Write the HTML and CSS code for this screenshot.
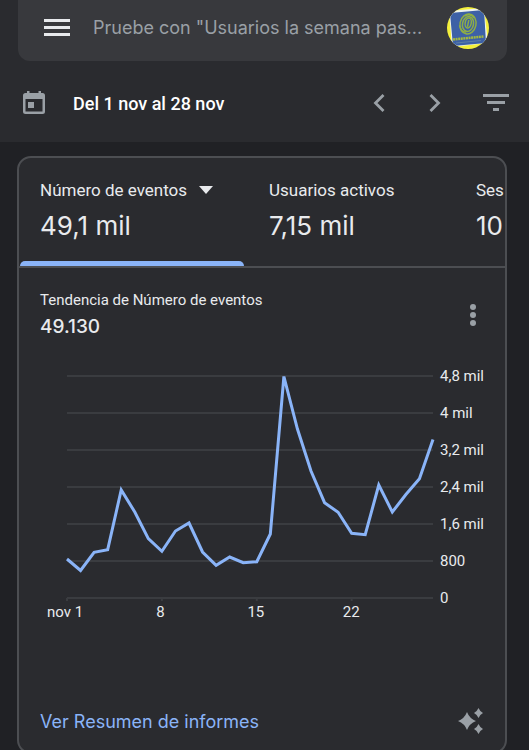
FILE: index.html
```html
<!DOCTYPE html>
<html lang="es">
<head>
<meta charset="utf-8">
<meta name="viewport" content="width=device-width, initial-scale=1">
<title>Resumen</title>
<link rel="stylesheet" href="styles.css">
</head>
<body>
<header class="header">
  <div class="search">
    <button class="icon-button" type="button" aria-label="Menú">
      <svg width="26" height="18" viewBox="0 0 26 18" fill="#e8eaed"><path d="M0 0h26v3H0zM0 7h26v3H0zM0 14h26v3H0z"/></svg>
    </button>
    <input class="search-input" type="text" aria-label="Buscar" placeholder="Pruebe con &quot;Usuarios la semana pas...">
    <button class="icon-button" type="button" aria-label="Cuenta">
      <svg width="42" height="42" viewBox="0 0 42 42">
        <defs><clipPath id="round"><circle cx="21" cy="21" r="21"/></clipPath></defs>
        <g clip-path="url(#round)">
          <path fill="#f4f03c" d="M0 0h42v42H0z"/>
          <path fill="#eef3ee" d="M2 4l35-3 4 35-36 4z"/>
          <path fill="#3d61a6" d="M3 6l34-3 2 33-33 3z"/>
          <g fill="none" stroke="#8fae45" stroke-width="1.500" transform="rotate(12 21 17)">
            <ellipse cx="21" cy="17" rx="8" ry="10"/>
            <ellipse cx="21" cy="17" rx="5.500" ry="7.500"/>
            <ellipse cx="21" cy="16" rx="3" ry="5"/>
            <path d="M21 13v7M13 20q3 7 8 5M16 10q5-5 10 0"/>
          </g>
          <path d="M6 32.500l31-3" stroke="#a3b93f" stroke-width="2.500" stroke-dasharray="2 .6"/>
          <path d="M9 36l25-2.500" stroke="#5d80a4" stroke-width="1"/>
        </g>
      </svg>
    </button>
  </div>
  <div class="dates">
    <svg width="22" height="24" viewBox="0 0 22 24" fill="#9aa0a6"><path fill-rule="evenodd" d="M4 0h2.500v2h9V0H18v2h1.500A2.500 2.500 0 0 1 22 4.500v16a2.500 2.500 0 0 1-2.500 2.500h-17A2.500 2.500 0 0 1 0 20.500v-16A2.500 2.500 0 0 1 2.500 2H4zM2.500 8v12.500h17V8z"/><path d="M5 11h6v6H5z"/></svg>
    <span class="range">Del 1 nov al 28 nov</span>
    <button class="icon-button" type="button" aria-label="Periodo anterior">
      <svg width="12" height="18" viewBox="0 0 12 18" fill="none" stroke="#9aa0a6" stroke-width="2.800"><path d="M10.500 1L2.500 9l8 8"/></svg>
    </button>
    <button class="icon-button next" type="button" aria-label="Periodo siguiente">
      <svg width="12" height="18" viewBox="0 0 12 18" fill="none" stroke="#9aa0a6" stroke-width="2.800"><path d="M1.500 1l8 8-8 8"/></svg>
    </button>
    <button class="icon-button filter" type="button" aria-label="Filtrar">
      <svg width="26" height="18" viewBox="0 0 26 18" fill="#9aa0a6"><path d="M0 0h26v3H0zM4 7h18v3H4zM10 14h6v3h-6z"/></svg>
    </button>
  </div>
</header>
<main class="main">
  <section class="card">
    <div class="metrics">
      <button class="metric selected" type="button">
        <span class="metric-name">Número de eventos
          <svg width="14" height="8" viewBox="0 0 14 8" fill="#e8eaed"><path d="M0 0h14L7 8z"/></svg>
        </span>
        <span class="metric-value">49,1 mil</span>
      </button>
      <button class="metric" type="button">
        <span class="metric-name">Usuarios activos</span>
        <span class="metric-value">7,15 mil</span>
      </button>
      <button class="metric" type="button">
        <span class="metric-name">Ses</span>
        <span class="metric-value">10</span>
      </button>
    </div>
    <div class="trend">
      <div>
        <h2 class="trend-title">Tendencia de Número de eventos</h2>
        <p class="trend-value">49.130</p>
      </div>
      <button class="icon-button" type="button" aria-label="Más opciones">
        <svg width="6" height="24" viewBox="0 0 6 24" fill="#9aa0a6"><circle cx="3" cy="4" r="3"/><circle cx="3" cy="12" r="3"/><circle cx="3" cy="20" r="3"/></svg>
      </button>
    </div>
    <div class="chart">
      <svg class="plot" viewBox="0 0 270 222" preserveAspectRatio="none" role="img" aria-label="Número de eventos por día">
        <path class="grid" d="M0 0H270M0 37H270M0 74H270M0 111H270M0 148H270M0 185H270M0 222H270M0 222v3M70 222v3M140 222v3M210 222v3"/>
        <polyline class="line" points="0,183 10,194.500 20,176.300 30,173.700 40,114 50,136 60,162.700 70,175.300 80,155 90,147 100,176 110,189.300 120,181 130,186.700 140,185.700 150,158 160,.5 170,53 180,95 190,126.700 200,136.300 210,157.300 220,158.700 230,109 240,136 250,118.500 260,102.700 270,63.500"/>
      </svg>
      <div class="y-axis">
        <span>4,8 mil</span><span>4 mil</span><span>3,2 mil</span><span>2,4 mil</span><span>1,6 mil</span><span>800</span><span>0</span>
      </div>
      <div class="x-axis">
        <span>nov 1</span><span>8</span><span>15</span><span>22</span>
      </div>
    </div>
    <footer class="card-footer">
      <a class="link" href="#">Ver Resumen de informes</a>
      <button class="icon-button" type="button" aria-label="Estadísticas">
        <svg width="26" height="26" viewBox="0 0 26 26" fill="#9aa0a6"><path d="M9 4q2.500 6.500 9 9-6.500 2.500-9 9-2.500-6.500-9-9 6.500-2.500 9-9zM20.500 0q1.500 3.500 4.500 5-3 1.500-4.500 5-1.500-3.500-4.500-5 3-1.500 4.500-5zM20.500 16q1.500 3.500 4.500 5-3 1.500-4.500 5-1.500-3.500-4.500-5 3-1.500 4.500-5z"/></svg>
      </button>
    </footer>
  </section>
</main>
</body>
</html>
```
FILE: styles.css
```css
* {
  box-sizing: border-box;
}

body {
  margin: 0;
  height: 100vh;
  overflow: hidden;
  background: #202125;
  color: #e8eaed;
  font-family: Roboto, sans-serif;
  font-size: 17px;
}

svg {
  display: block;
  flex: none;
}

button {
  padding: 0;
  border: 0;
  background: none;
  color: inherit;
  font: inherit;
  text-align: left;
}

.icon-button {
  flex: none;
}

.header {
  height: 142px;
  padding: 0 22px 0 18px;
  background: #2a2b2f;
}

.search {
  display: flex;
  align-items: center;
  gap: 16px;
  height: 61px;
  padding: 0 18px 6px 26px;
  border-radius: 0 0 12px 12px;
  background: #38393d;
}

.search-input {
  flex: 1;
  min-width: 0;
  padding: 0 0 0 7px;
  border: 0;
  outline: 0;
  background: none;
  color: #e8eaed;
  font-family: Inter, sans-serif;
  font-size: 18px;
}

.search-input::placeholder {
  color: #9aa0a6;
  opacity: 1;
}

.dates {
  display: flex;
  align-items: center;
  height: 84px;
  padding-left: 5px;
}

.range {
  flex: 1;
  padding-left: 28px;
  color: #fff;
  font-size: 18px;
  font-weight: 500;
}

.next {
  margin-left: 44px;
}

.filter {
  margin: 0 -2px 0 42px;
}

.main {
  padding: 14px 22px 0 17px;
}

.card {
  overflow: hidden;
  border: 2px solid #4c4e52;
  border-radius: 14px;
  background: #2a2b2f;
}

.metrics {
  display: flex;
  height: 110px;
  overflow: hidden;
  border-bottom: 2px solid #4c4e52;
}

.metric {
  position: relative;
  flex: none;
  display: flex;
  flex-direction: column;
  gap: 8px;
  width: 207px;
  padding: 22px 21px 0;
}

.metric.selected {
  width: 229px;
}

.metric.selected::after {
  content: "";
  position: absolute;
  right: 4px;
  bottom: 0;
  left: 1px;
  height: 5px;
  border-radius: 5px 5px 0 0;
  background: #8ab4f8;
}

.metric-name {
  display: flex;
  align-items: center;
  gap: 12px;
  line-height: 20px;
}

.metric-value {
  font-family: Inter, sans-serif;
  font-size: 26px;
  line-height: 36px;
}

.trend {
  display: flex;
  align-items: center;
  justify-content: space-between;
  padding: 20px 29px 0 21px;
}

.trend-title {
  margin: 0;
  font-size: 15px;
  font-weight: 400;
  line-height: 24px;
}

.trend-value {
  margin: 0;
  font-family: Inter, sans-serif;
  font-size: 19px;
  font-weight: 500;
  line-height: 30px;
}

.chart {
  display: grid;
  grid-template-columns: 1fr 67px;
  row-gap: 4px;
  padding: 34px 5px 0 48px;
  font-size: 15px;
}

.plot {
  width: 100%;
  height: 222px;
  overflow: visible;
}

.grid,
.line {
  fill: none;
  vector-effect: non-scaling-stroke;
}

.grid {
  stroke: #3a3c40;
  stroke-width: 2px;
}

.line {
  stroke: #8ab4f8;
  stroke-width: 3px;
}

.y-axis {
  display: flex;
  flex-direction: column;
  justify-content: space-between;
  height: 238px;
  margin: -8px 0;
  padding-left: 7px;
  line-height: 16px;
}

.x-axis {
  display: grid;
  grid-template-columns: 7fr 7fr 7fr 6fr;
  margin-left: -2px;
  line-height: 20px;
}

.x-axis span {
  display: flex;
  justify-content: center;
  width: 0;
  white-space: nowrap;
}

.card-footer {
  display: flex;
  align-items: center;
  justify-content: space-between;
  padding: 86px 21px 18px;
}

.link {
  color: #8ab4f8;
  font-family: Inter, sans-serif;
  font-size: 18px;
  text-decoration: none;
}
```
